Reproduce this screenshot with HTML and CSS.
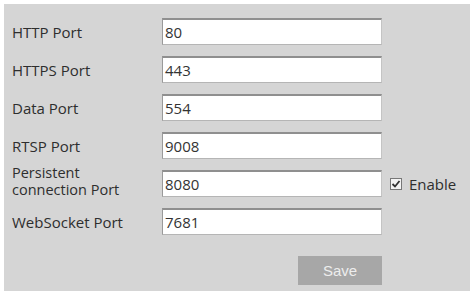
FILE: index.html
```html
<!DOCTYPE html>
<html>
<head>
<meta charset="utf-8">
<link rel="stylesheet" href="styles.css">
</head>
<body>
<div class="panel">
  <form class="form">
    <label class="label">HTTP Port</label>
    <div class="field">80</div>
    <span></span>

    <label class="label">HTTPS Port</label>
    <div class="field">443</div>
    <span></span>

    <label class="label">Data Port</label>
    <div class="field">554</div>
    <span></span>

    <label class="label">RTSP Port</label>
    <div class="field">9008</div>
    <span></span>

    <label class="label label-two"><span class="line">Persistent</span><span class="line">connection Port</span></label>
    <div class="field">8080</div>
    <div class="check">
      <span class="box"><svg width="10" height="10" viewBox="0 0 10 10"><path d="M1.5 5 L4 7.5 L8.5 2" fill="none" stroke="#333" stroke-width="1.8"/></svg></span>
      <span class="check-text">Enable</span>
    </div>

    <label class="label">WebSocket Port</label>
    <div class="field">7681</div>
    <span></span>

    <span></span>
    <div class="actions"><button type="button" class="save">Save</button></div>
    <span></span>
  </form>
</div>
</body>
</html>
```
FILE: styles.css
```css
html, body {
  margin: 0;
  padding: 0;
  background: #ffffff;
}
body {
  padding: 4px 3px 1px 4px;
  font-family: "Open Sans", "Noto Sans", sans-serif;
}
.panel {
  background: #d5d5d5;
  width: 466px;
  height: 287px;
  box-sizing: border-box;
  padding: 14px 0 0 8px;
}
.form {
  display: grid;
  grid-template-columns: 142px 220px auto;
  grid-template-rows: repeat(6, 27px) auto;
  row-gap: 11px;
  column-gap: 8px;
  align-items: center;
}
.label {
  font-size: 15px;
  color: #2e2e2e;
  line-height: 18px;
  white-space: nowrap;
}
.label-two {
  display: flex;
  flex-direction: column;
  font-size: 14.5px;
  line-height: 17px;
  margin-top: -5px;
}
.line {
  display: block;
  height: 17px;
}
.field {
  height: 27px;
  box-sizing: border-box;
  background: #ffffff;
  border-top: 2px solid #8f8f8f;
  border-left: 1px solid #9a9a9a;
  border-right: 1px solid #c4c4c4;
  border-bottom: 1px solid #b5b5b5;
  font-size: 15px;
  color: #333;
  padding: 2px 0 0 2px;
  line-height: 20px;
}
.check {
  display: flex;
  align-items: center;
  gap: 7px;
}
.box {
  width: 12px;
  height: 12px;
  box-sizing: border-box;
  border: 1px solid #777;
  background: #f4f4f4;
  display: flex;
  align-items: center;
  justify-content: center;
}
.check-text {
  font-size: 15px;
  color: #2e2e2e;
}
.actions {
  display: flex;
  justify-content: flex-end;
  margin-top: 10px;
}
.save {
  width: 84px;
  height: 29px;
  background: #a7a7a7;
  border: none;
  color: #ededed;
  font-family: "Liberation Sans", sans-serif;
  font-size: 15px;
  padding: 0;
}
```
